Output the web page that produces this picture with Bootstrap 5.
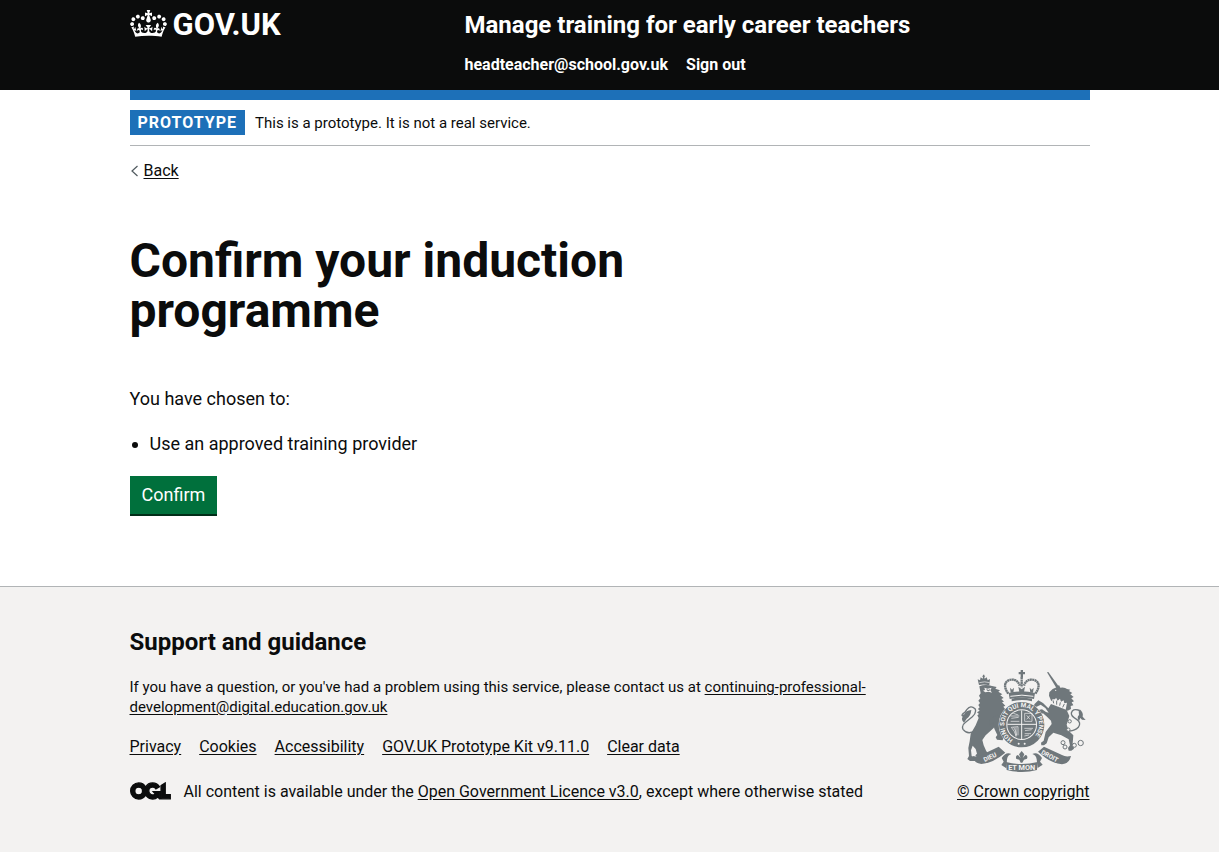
<!DOCTYPE html>
<html lang="en">
<head>
<meta charset="utf-8">
<meta name="viewport" content="width=device-width, initial-scale=1">
<title>Confirm your induction programme</title>
<link href="https://cdn.jsdelivr.net/npm/bootstrap@5.3.0/dist/css/bootstrap.min.css" rel="stylesheet">
<style>
  :root { --ink: #0b0c0c; --blue: #1d70b8; --rule: #b1b4b6; }
  body { font-family: Roboto, "Liberation Sans", sans-serif; font-size: 16px; line-height: 20px; color: var(--ink); background: #f3f2f1; }
  a, a:hover { color: var(--ink); text-underline-offset: 2px; }
  .page-width { max-width: 992px; padding-left: 16px; padding-right: 16px; }
  .site-header { background: var(--ink); }
  .site-header a { color: #fff; text-decoration: none; font-weight: 700; }
  .header-row { padding-top: 10px; padding-bottom: 15px; }
  .logo-link { font-size: 31px; line-height: 30px; gap: 6px; }
  .header-content { padding-left: 15px; }
  .service-name { font-size: 24px; line-height: 30px; }
  .account-nav { gap: 18px; padding-top: 15px; }
  .blue-bar { height: 10px; background: var(--blue); }
  .phase { padding: 10px 0; border-bottom: 1px solid var(--rule); gap: 10px; }
  .phase-tag { background: var(--blue); color: #fff; font-weight: 700; letter-spacing: 1px; line-height: 25px; padding: 0 8px; }
  .phase-text, .site-footer p { font-size: 15px; }
  .back-row { padding-top: 15px; gap: 5px; }
  .content { padding: 55px 0 70px; font-size: 18px; line-height: 25px; }
  .content h1 { font-size: 48px; line-height: 50px; font-weight: 700; margin-bottom: 50px; }
  .content p, .content ul { margin-bottom: 20px; }
  .content ul { padding-left: 20px; }
  .confirm-btn { --bs-btn-bg: #00703c; --bs-btn-hover-bg: #005a30; --bs-btn-active-bg: #005a30; --bs-btn-color: #fff; --bs-btn-hover-color: #fff; --bs-btn-active-color: #fff; --bs-btn-font-size: 18px; --bs-btn-line-height: 20px; --bs-btn-border-radius: 0; --bs-btn-border-width: 0; --bs-btn-padding-x: 12px; --bs-btn-padding-y: 9px; box-shadow: 0 2px 0 #002d18; margin-bottom: 2px; }
  .site-footer { border-top: 1px solid var(--rule); padding: 40px 0; }
  .site-footer h2 { font-size: 24px; line-height: 30px; font-weight: 700; margin-bottom: 20px; }
  .site-footer p { margin-bottom: 20px; }
  .footer-links { column-gap: 18px; margin-bottom: 25px; }
  .licence { gap: 13px; }
  .footer-main { max-width: 780px; }
  .crest-link { gap: 10px; }
</style>
</head>
<body>
<header class="site-header">
  <div class="container-fluid page-width">
    <div class="row g-0 header-row">
      <div class="col-md-4">
        <a href="#" class="logo-link d-inline-flex align-items-start">
          <svg width="37" height="27" viewBox="0 0 132 97" fill="currentColor" aria-hidden="true"><path d="M25 30.2c3.5 1.5 7.7-.2 9.1-3.7 1.5-3.6-.2-7.8-3.9-9.2-3.6-1.4-7.6.3-9.1 3.9-1.4 3.5.3 7.5 3.9 9zM9 39.5c3.6 1.5 7.8-.2 9.2-3.7 1.5-3.6-.2-7.8-3.9-9.1-3.6-1.5-7.6.2-9.1 3.8-1.4 3.5.3 7.5 3.8 9zM4.4 57.2c3.5 1.5 7.7-.2 9.1-3.8 1.5-3.6-.2-7.7-3.9-9.1-3.5-1.5-7.6.3-9.1 3.8-1.4 3.5.3 7.6 3.9 9.1zm38.3-21.4c3.5 1.5 7.7-.2 9.1-3.8 1.5-3.6-.2-7.7-3.9-9.1-3.6-1.5-7.6.3-9.1 3.8-1.3 3.6.4 7.7 3.9 9.1zm64.4-5.6c-3.6 1.5-7.8-.2-9.1-3.7-1.5-3.6.2-7.8 3.8-9.2 3.6-1.4 7.7.3 9.2 3.9 1.3 3.5-.4 7.5-3.9 9zm15.9 9.3c-3.6 1.5-7.7-.2-9.1-3.7-1.5-3.6.2-7.8 3.7-9.1 3.6-1.5 7.7.2 9.2 3.8 1.5 3.5-.3 7.5-3.8 9zm4.7 17.7c-3.6 1.5-7.8-.2-9.2-3.8-1.5-3.6.2-7.7 3.9-9.1 3.6-1.5 7.7.3 9.2 3.8 1.3 3.5-.4 7.6-3.9 9.1zM89.3 35.8c-3.6 1.5-7.8-.2-9.2-3.8-1.4-3.6.2-7.7 3.9-9.1 3.6-1.5 7.7.3 9.2 3.8 1.4 3.6-.3 7.7-3.9 9.1zM69.7 17.7l8.9 4.7V9.3l-8.9 2.8c-.2-.3-.5-.6-.9-.9L72.4 0H59.6l3.5 11.2c-.3.3-.6.5-.9.9l-8.8-2.8v13.1l8.8-4.7c.3.3.6.7.9.9l-5 15.4v.1c-.2.8-.4 1.6-.4 2.4 0 4.1 3.1 7.5 7 8.1h.2c.3 0 .7.1 1 .1.4 0 .7 0 1-.1h.2c4-.6 7.1-4.1 7.1-8.1 0-.8-.1-1.7-.4-2.4V34l-5.1-15.4c.4-.2.7-.6 1-.9zM66 92.8c16.9 0 32.8 1.1 47.1 3.2 4-16.9 8.9-26.7 14-33.5l-9.6-3.4c1 4.9 1.1 7.2 0 10.2-1.5-1.4-3-4.3-4.2-8.7L108.6 76c2.8-2 5-3.2 7.5-3.3-4.4 9.4-10 11.9-13.6 11.2-4.3-.8-6.3-4.6-5.6-7.9 1-4.7 5.7-5.9 8-.5 4.3-8.7-3-11.4-7.6-8.8 7.1-7.2 7.9-13.5 2.1-21.1-8 6.1-8.1 12.3-4.5 20.8-4.7-5.4-12.1-2.5-9.5 6.2 3.4-5.2 7.9-2 7.2 3.1-.6 4.3-6.4 7.8-13.5 7.2-10.3-.9-10.9-8-11.2-13.8 2.5-.5 7.1 1.8 11 7.3L80.2 60c-4.1 4.4-8 5.3-12.3 5.4 1.4-4.4 8-11.6 8-11.6H55.5s6.4 7.2 7.9 11.6c-4.2-.1-8-1-12.3-5.4l1.4 16.4c3.9-5.5 8.5-7.7 10.9-7.3-.3 5.8-.9 12.8-11.1 13.8-7.2.6-12.9-2.9-13.5-7.2-.7-5 3.8-8.3 7.1-3.1 2.7-8.7-4.6-11.6-9.4-6.2 3.7-8.5 3.6-14.7-4.6-20.8-5.8 7.6-5 13.9 2.2 21.1-4.7-2.6-11.9.1-7.7 8.8 2.3-5.5 7.1-4.2 8.1.5.7 3.3-1.3 7.1-5.7 7.9-3.5.7-9-1.8-13.5-11.2 2.5.1 4.7 1.3 7.5 3.3l-4.7-15.4c-1.2 4.4-2.7 7.2-4.3 8.7-1.1-3-.9-5.3 0-10.2l-9.5 3.4c5 6.9 9.9 16.7 14 33.5 14.8-2.1 30.8-3.2 47.7-3.2z"/></svg>
          <span>GOV.UK</span>
        </a>
      </div>
      <div class="col-md-8 header-content">
        <a href="#" class="service-name d-block">Manage training for early career teachers</a>
        <nav class="account-nav d-flex flex-wrap" aria-label="Account">
          <a href="#">headteacher@school.gov.uk</a>
          <a href="#">Sign out</a>
        </nav>
      </div>
    </div>
  </div>
</header>

<div class="bg-white">
  <div class="container-fluid page-width">
    <div class="blue-bar"></div>
    <div class="phase d-flex align-items-center">
      <strong class="phase-tag">PROTOTYPE</strong>
      <span class="phase-text">This is a prototype. It is not a real service.</span>
    </div>
    <div class="back-row d-flex align-items-center">
      <svg width="9" height="12" viewBox="0 0 9 12" fill="none" stroke="#505a5f" stroke-width="1.2" aria-hidden="true"><path d="M7.500 1 2 6l5.500 5"/></svg>
      <a href="#">Back</a>
    </div>
    <main class="content">
      <div class="row">
        <div class="col-md-8">
          <h1>Confirm your induction programme</h1>
          <p>You have chosen to:</p>
          <ul><li>Use an approved training provider</li></ul>
          <button type="button" class="btn confirm-btn d-block">Confirm</button>
        </div>
      </div>
    </main>
  </div>
</div>

<footer class="site-footer">
  <div class="container-fluid page-width">
    <div class="d-flex flex-wrap flex-md-nowrap justify-content-between align-items-end gap-4">
      <div class="footer-main">
        <h2>Support and guidance</h2>
        <p>If you have a question, or you've had a problem using this service, please contact us at <a href="#">continuing-professional-development@digital.education.gov.uk</a></p>
        <nav class="footer-links d-flex flex-wrap" aria-label="Support links">
          <a href="#">Privacy</a>
          <a href="#">Cookies</a>
          <a href="#">Accessibility</a>
          <a href="#">GOV.UK Prototype Kit v9.11.0</a>
          <a href="#">Clear data</a>
        </nav>
        <div class="licence d-flex align-items-start">
          <svg class="flex-shrink-0" width="41" height="18" viewBox="-8 -8 500 212" fill="#0b0c0c" stroke="#0b0c0c" stroke-width="16" aria-hidden="true"><path d="M421.500 142.800V.1l-50.700 32.300v161.100h112.400v-50.700zm-122.300-9.600A47.120 47.120 0 0 1 221 97.800c0-26 21.100-47.100 47.100-47.100 16.700 0 31.400 8.700 39.700 21.800l42.700-27.200A97.630 97.630 0 0 0 268.100 0c-36.500 0-68.300 20.100-85.100 49.700A98 98 0 0 0 97.800 0C43.900 0 0 43.900 0 97.800s43.900 97.800 97.800 97.800c36.500 0 68.300-20.100 85.100-49.700a97.760 97.760 0 0 0 149.600 25.400l19.400 22.200h3v-87.800h-80l24.300 27.500zM97.800 145c-26 0-47.100-21.100-47.100-47.100s21.100-47.100 47.100-47.100 47.100 21.100 47.100 47.100S123.800 145 97.800 145"/></svg>
          <span>All content is available under the <a href="#">Open Government Licence v3.0</a>, except where otherwise stated</span>
        </div>
      </div>
      <a href="#" class="crest-link d-flex flex-column align-items-center flex-shrink-0">
        <svg width="125" height="102" viewBox="36 30 375 306" fill="#6f777b" aria-hidden="true">
          <!-- crown over the shield -->
          <path d="M215 30h7v6h6v7h-6v10h-7V43h-6v-7h6z"/>
          <g fill="none" stroke="#6f777b" stroke-width="7" stroke-dasharray="6 1"><path d="M178 101c-14-19-13-35 3-41 15-4 27 2 31 17M259 101c14-19 13-35-3-41-15-4-27 2-31 17M218 52v30"/></g>
          <path d="M179 99q39-10 79 0l-3 18q-36-8-73 0z"/>
          <path d="M183 83l6 6 6-6-2 15h-8zM242 83l6 6 6-6-2 15h-8zM208 80l10 8 10-8-3 16h-14z"/>
          <path stroke="#f3f2f1" stroke-width="3" fill="none" d="M184 109q35-7 69 0"/>
          <path d="M188 116q30-6 61 0v8q-30-8-61 0z"/>
          <!-- lion -->
          <path d="M90 75L86 58l7 3 2-9 6 4 1-5-3-3 3-1v-3h4v3l3 1-3 3 1 5 6-4 3 9 7-4-2 19q-16-5-31-1z"/>
          <path stroke="#f3f2f1" stroke-width="2" fill="none" d="M91 68q16-5 31 0"/>
          <path d="M91 79q18-7 38-1l14 3-4 5 14 5-5 4 12 8-6 3 10 8-7 3 8 8-6 2 10 10-6 3 7 9-6 3q12 12 12 26l-6 20-16-12-8-14-4 16-8 16-24 22-10 14 4 16 8 18 12 12-2 7H85l-6-7 5-5-4-14-9-10-5 14 2 17 10 7 1 8H63l-8-6 5-9-2-24 4-20 3-22 15-26 9-22-4-8 5-4-6-5 8-5-5-5 5-5-4-7 5-6-5-7 6-7-4-8 5-7z"/>
          <path d="M106 83l10 3 12-3-4 8 5 7-10-3-10 2-7-5 6-2z" fill="#f3f2f1"/>
          <path d="M112 86l6 4 6-3-3 6-7-1z"/>
          <path d="M122 178l24-14 10 16-6 26 14 26-3 9-17-2-4-7 5-7-9-19-4-18-12 8z"/>
          <path d="M78 212q-22 14-36-4-5-12 6-20l22-18q14-13 8-24-13-12-24 2-7 12-14 14" fill="none" stroke="#6f777b" stroke-width="4"/>
          <path d="M67 150q-2 20-14 26-4 6-8 12-10-8-4-18-7-2-2-9 3 3 7 2 4-12 21-13z"/>
          <!-- unicorn -->
          <path d="M294 37l4-1 33 46-7 5z"/>
          <path d="M300 107l1-10 10-10 12-5 7-7 4 8q14-2 20 4l10 2-4 4 10 6-6 4 10 8-7 4 8 9-7 3 5 9-8 2 1 9-10 5-42-20-4-10 14-6-10 2-7 6z"/>
          <circle cx="320" cy="91" r="2" fill="#f3f2f1"/>
          <path d="M310 118l7 2 4-7 5 9 7-6 3 9 8-4 2 9 8-2-4 22-44-20z" fill="#f3f2f1"/>
          <path d="M312 121l2 9M323 122v12M334 127l-2 10M346 132l-5 10" stroke="#6f777b" stroke-width="3"/>
          <path d="M306 132l47 18 8 18-8 26 6 18 14 14-2 24 4 16-8 6h-8l-2-8 6-8-4-18-22-12-24-8-14 14-6 18-8 6h-8l-1-8 8-6 6-26 18-24-2-10-12-12-12-10-11 4-6-6 4-8 10-2 12 8 8 2-10-14-14-10-12 6-9 1 2-8 12-12 14 8 16 16z"/>
          <path d="M354 212q20 4 34-10 10-14-5-24-17-9-16-19 4-14 21-9 11 8 5 18" fill="none" stroke="#6f777b" stroke-width="4"/>
          <path d="M392 148q12 10 9 22l9 10-11-1-5-5-4 9q-8-10 0-18-3-8 2-17z"/>
          <g fill="#f3f2f1" stroke="#6f777b" stroke-width="3"><circle cx="342" cy="248" r="6"/><circle cx="348" cy="261" r="6"/><circle cx="376" cy="256" r="6"/><circle cx="395" cy="249" r="8"/><circle cx="362" cy="184" r="5"/><circle cx="358" cy="209" r="5"/></g>
          <!-- garter and quartered shield -->
          <circle cx="218" cy="194" r="69" fill="#f3f2f1"/>
          <circle cx="218" cy="194" r="57" fill="none" stroke="#6f777b" stroke-width="22"/>
          <circle cx="218" cy="194" r="43"/>
          <path fill="none" stroke="#f3f2f1" stroke-width="3" d="M218 151v86M175 193h86"/>
          <path fill="none" stroke="#f3f2f1" stroke-width="2" d="M184 168h27M187 175l22-3M185 184h26M193 160l15 5M227 160h22v24h-22zM233 166l10 12M243 166l-10 12M187 202q11 12 14 26M194 202q7 10 9 24M201 202v28M187 202l20-2v26M226 205h26M228 212l20-3M227 221h19M226 228l14-3"/>
          <path id="motto-ring" fill="none" d="M192 239A52 52 0 1 1 244 239"/>
          <text fill="#f3f2f1" font-weight="700" font-size="19"><textPath href="#motto-ring">HONI SOIT QUI MAL Y PENSE</textPath></text>
          <circle cx="209" cy="251" r="3" fill="#f3f2f1"/><circle cx="227" cy="251" r="3" fill="#f3f2f1"/>
          <!-- motto scroll and plant -->
          <path d="M70 288q16 4 27-3l52-25 20 18q-38 32-72 34-22-2-27-24z"/>
          <path d="M366 288q-16 4-27-3l-54-25-18 15 22 18q26 18 50 20 22-2 27-25z"/>
          <path d="M158 294q13-20 29-12-11 3-13 16l-2 27-15-10 7-10zM279 294q-13-20-29-12 11 3 13 16l3 26 15-10-8-9z"/>
          <path d="M171 306q47 12 95 0l-2 24q-44 12-91 0z"/>
          <path d="M218 273l8 10-5 11 8-9q9 1 5 11l-9 3-5 9h-5l-4-9-9-2q-4-11 5-12l8 9-5-11z"/>
          <g fill="#f3f2f1" font-weight="700">
            <text font-size="19" transform="translate(107 306) rotate(-25)">DIEU</text>
            <text font-size="19" transform="translate(275 281) rotate(28)">DROIT</text>
            <text x="218" y="330" font-size="22" text-anchor="middle">ET MON</text>
          </g>
        </svg>
        <span>© Crown copyright</span>
      </a>
    </div>
  </div>
</footer>
<script src="https://cdn.jsdelivr.net/npm/bootstrap@5.3.0/dist/js/bootstrap.bundle.min.js"></script>
</body>
</html>
